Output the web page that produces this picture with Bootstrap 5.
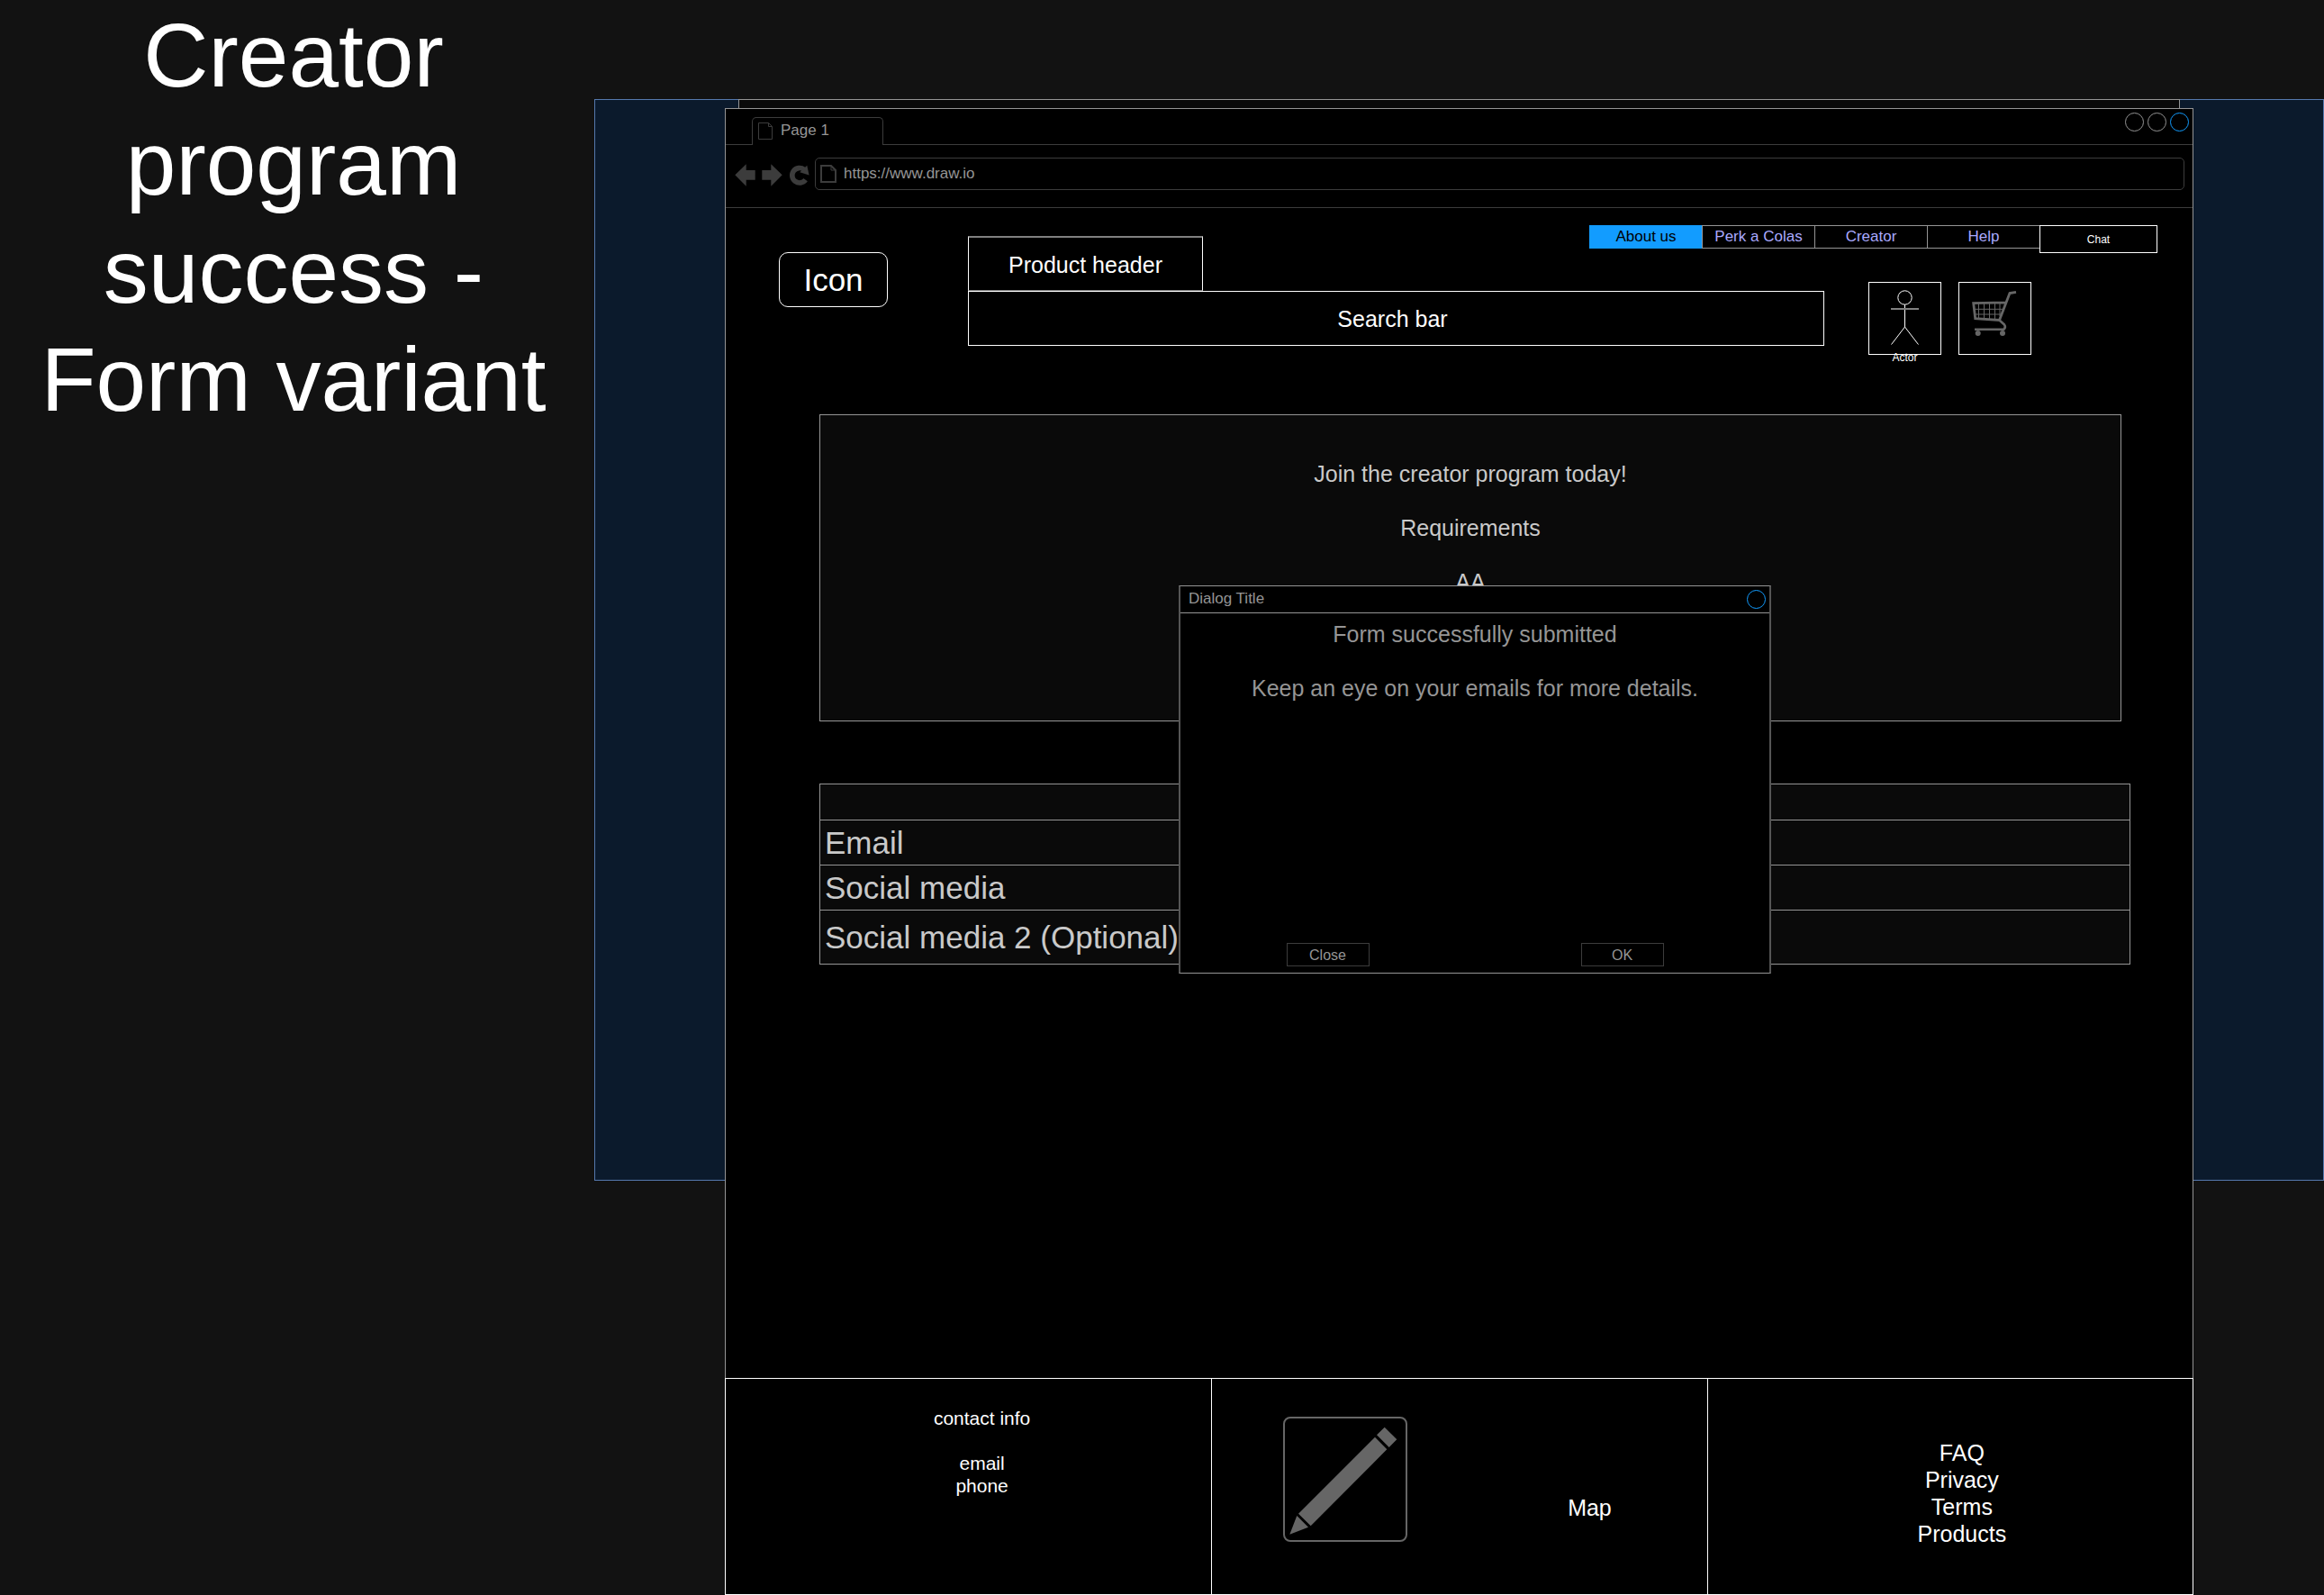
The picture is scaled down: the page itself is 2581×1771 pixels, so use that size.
<!DOCTYPE html>
<html lang="en">
<head>
<meta charset="utf-8">
<meta name="viewport" content="width=device-width, initial-scale=1">
<title>Creator program success - Form variant</title>
<link href="https://cdn.jsdelivr.net/npm/bootstrap@5.3.0/dist/css/bootstrap.min.css" rel="stylesheet">
<style>
  :root { --line: #959595; --dim: #3c3c3c; --panel: #0a0a0a; --blue: #129cff; }
  body { background: #121212; color: #fff; font-family: "Liberation Sans", Arial, sans-serif; font-size: 25px; line-height: 30px; }
  a { color: inherit; text-decoration: none; }
  button, input { font: inherit; color: inherit; background: transparent; }
  input:focus { outline: 1px solid var(--blue); }
  svg { display: block; }

  .side-title { flex: 0 0 660px; font-size: 100px; line-height: 120px; font-weight: 400; padding: 1px 8px 0 0; }

  /* layered boards: backdrop, sheet and browser share one grid cell */
  .stage { padding-top: 110px; grid-template-columns: minmax(0, 1fr); }
  .stage > * { grid-area: 1 / 1; }
  .backdrop { height: 1201px; background: #0b1a2c; border: 1px solid #5578ad; }
  .sheet { height: 1201px; margin: 0 160px; background: var(--panel); border: 1px solid var(--line); }
  .browser { margin: 10px 145px 0; background: #000; border: 1px solid var(--line); border-bottom: 0; }

  .titlebar { border-bottom: 1px solid var(--dim); color: var(--line); font-size: 17px; line-height: 20px; height: 40px; padding: 0 4px 0 29px; }
  .tab-page { width: 146px; height: 31px; margin-bottom: -1px; padding: 0 6px 2px; gap: 8px; border: 1px solid var(--dim); border-bottom: 0; border-radius: 5px 5px 0 0; background: #000; }
  .dot-btn { width: 21px; height: 21px; padding: 0; border: 1px solid var(--line); border-radius: 50%; }
  .dot-btn.close-dot { border-color: var(--blue); }
  .win-dots { gap: 4px; padding-top: 4px; }

  .toolbar { height: 70px; padding: 14px 9px 0 10px; gap: 6px; border-bottom: 1px solid var(--dim); color: var(--line); font-size: 17px; line-height: 20px; }
  .tool-btns { gap: 7px; height: 38px; }
  .tool-btns button { border: 0; padding: 0; }
  .address { height: 36px; border: 1px solid var(--dim); border-radius: 5px; padding: 0 5px; gap: 8px; }
  .address input { border: 0; padding: 0; }

  .site-head { display: grid; grid-template-columns: 210px minmax(0, 1fr) 370px; padding: 19px 39px 0 59px; align-items: start; }
  .site-head > * { grid-row: 1; }
  .logo-box { grid-column: 1; width: 121px; height: 61px; margin-top: 30px; border: 1px solid #fff; border-radius: 10px; font-size: 35px; line-height: 42px; }
  .search-area { grid-column: 2; margin-top: 12px; }
  .product-box { width: 261px; height: 61px; padding-top: 2px; border: 1px solid #fff; border-top: 2px solid #808080; border-bottom-color: #808080; }
  .search-box { height: 61px; border: 1px solid #fff; border-radius: 0; text-align: center; padding: 2px 8px 0 0; }
  .search-box::placeholder { color: #fff; opacity: 1; }
  .top-nav { grid-column: 2 / 4; justify-self: end; font-size: 17px; line-height: 20px; color: #aaf; }
  .top-nav a { width: 125px; height: 26px; border: 1px solid var(--line); border-right: 0; }
  .top-nav a.current { background: var(--blue); border-color: var(--blue); color: #000; }
  .top-nav a.chat-link { width: 131px; height: 31px; border: 1px solid #fff; color: #fff; font-size: 12px; }
  .tiles { grid-column: 3; margin: 63px 0 0 49px; gap: 19px; }
  .tile { width: 81px; height: 81px; border: 1px solid #fff; }
  .tile-label { bottom: -11px; font-size: 12px; line-height: 14px; }

  .content-area { margin: 66px 69px 0 104px; color: #c9c9c9; }
  .hero { height: 341px; margin-right: 10px; padding-top: 50px; background: var(--panel); border: 1px solid var(--line); }
  .hero p, .dialog-text p { margin-bottom: 30px; }
  .entry-form { margin-top: 69px; background: var(--panel); border: 1px solid var(--line); font-size: 35px; line-height: 42px; }
  .form-head { height: 39px; }
  .entry-row { height: 50px; padding-left: 5px; border-top: 1px solid var(--line); }
  .entry-row.tall { height: 60px; }
  .entry-row label { flex: 0 0 50%; }
  .entry-row input { border: 0; min-width: 0; }

  .dialog { top: 190px; width: 658px; height: 431px; background: #000; border: 1px solid var(--line); border-left: 2px solid #555; border-right: 2px solid #555; color: var(--line); }
  .dialog-bar { height: 30px; padding: 0 4px 0 9px; border-bottom: 1px solid var(--line); font-size: 17px; line-height: 20px; }
  .dialog-bar span { padding-bottom: 2px; }
  .dialog-text { padding-top: 8px; }
  .dialog-btns { padding-bottom: 7px; font-size: 16px; line-height: 20px; }
  .dialog-btns button { width: 92px; height: 26px; padding: 2px 0 0; border: 1px solid var(--dim); }

  .site-foot { height: 241px; margin: 0 -1px; border: 1px solid #fff; }
  .foot-cell { width: 33.1%; }
  .foot-cell + .foot-cell { border-left: 1px solid #fff; }
  .contact { padding: 31px 0 0 30px; font-size: 21px; line-height: 25px; }
  .contact p { margin-bottom: 25px; }
  .map-cell { width: 33.8%; padding: 42px 106px 0 78px; }
  .map-cell span { padding-bottom: 81px; }
  .foot-links { padding: 67px 0 0 26px; }
</style>
</head>
<body>
<div class="d-flex min-vh-100">
  <h1 class="side-title text-center mb-0">Creator program success - Form variant</h1>

  <div class="stage d-grid flex-grow-1">
    <div class="backdrop"></div>
    <div class="sheet"></div>

    <div class="browser d-flex flex-column">
      <div class="titlebar d-flex justify-content-between">
        <div class="tab-page d-flex align-items-center align-self-end">
          <svg width="17" height="20" viewBox="0 0 17 20" fill="none" stroke="#3c3c3c"><path d="M.5 1.5h11l4 4v14H.5z M11.5 1.5v4h4"/></svg>
          <span>Page 1</span>
        </div>
        <div class="win-dots d-flex">
          <button class="dot-btn" type="button" aria-label="Minimize"></button>
          <button class="dot-btn" type="button" aria-label="Maximize"></button>
          <button class="dot-btn close-dot" type="button" aria-label="Close window"></button>
        </div>
      </div>

      <div class="toolbar d-flex align-items-start">
        <div class="tool-btns d-flex align-items-center">
          <button type="button" aria-label="Back"><svg width="23" height="26" viewBox="0 0 23 26" fill="#3c3c3c"><path d="M.3 13.3 12.7 1.3V8h10v10.7h-10v7z"/></svg></button>
          <button type="button" aria-label="Forward"><svg width="23" height="26" viewBox="0 0 23 26" fill="#3c3c3c"><path d="M22.7 13.3 10.3 1.3V8h-10v10.7h10v7z"/></svg></button>
          <button type="button" aria-label="Reload"><svg width="23" height="26" viewBox="0 0 23 26" fill="none"><path d="M18.6 18.6A8.2 8.2 0 1 1 17 7.3" stroke="#3c3c3c" stroke-width="5.6"/><path d="M20.3 2.8 22.6 13.6 12.2 10.2z" fill="#3c3c3c"/></svg></button>
        </div>
        <div class="address d-flex align-items-center flex-grow-1">
          <svg width="18" height="22" viewBox="0 0 18 22" fill="none" stroke="#3c3c3c" stroke-width="2"><path d="M1 2h11l5 5v13H1z"/><path d="M12 2v5h5" stroke-width="1"/></svg>
          <input class="flex-grow-1" type="text" value="https://www.draw.io" aria-label="Address">
        </div>
      </div>

      <header class="site-head">
        <a href="#" class="logo-box d-flex align-items-center justify-content-center">Icon</a>
        <div class="search-area">
          <a href="#" class="product-box d-flex align-items-center justify-content-center">Product header</a>
          <input class="search-box d-block w-100" type="text" placeholder="Search bar" aria-label="Search bar">
        </div>
        <nav class="top-nav d-flex align-items-start">
          <a href="#" class="current d-flex align-items-center justify-content-center">About us</a>
          <a href="#" class="d-flex align-items-center justify-content-center">Perk a Colas</a>
          <a href="#" class="d-flex align-items-center justify-content-center">Creator</a>
          <a href="#" class="d-flex align-items-center justify-content-center">Help</a>
          <a href="#" class="chat-link d-flex align-items-center justify-content-center">Chat</a>
        </nav>
        <div class="tiles d-flex">
          <a href="#" class="tile position-relative">
            <svg width="79" height="79" viewBox="1 1 79 79" fill="none" stroke="#fff"><circle cx="40.5" cy="17.5" r="7.7"/><path d="M40.5 25.2V50L25.5 69.5M40.5 50l15 19.5"/><path d="M25 30h31" stroke="#808080" stroke-width="2"/></svg>
            <span class="tile-label position-absolute start-50 translate-middle-x">Actor</span>
          </a>
          <a href="#" class="tile" aria-label="Cart">
            <svg width="79" height="79" viewBox="1 1 79 79" fill="none" stroke="#666">
              <path d="M64 11.3 57 12.5 45.5 42.5 18.7 40.6 16.7 23.6 52.5 22.8" stroke-width="2.8"/>
              <path d="M45.5 42.5 51 47.5Q53 50 50.5 52.7H18" stroke-width="2.6"/>
              <path d="M22.5 24v17M28.5 24v17M34.5 24v18M40.5 24v18M46 24v14M18 30.3h31M18 36h29"/>
              <circle cx="21.7" cy="57" r="3" fill="#666" stroke="none"/><circle cx="49" cy="57" r="3" fill="#666" stroke="none"/>
            </svg>
          </a>
        </div>
      </header>

      <main class="content-area position-relative flex-grow-1">
        <section class="hero text-center">
          <p>Join the creator program today!</p>
          <p>Requirements</p>
          <p>AA</p>
        </section>

        <form class="entry-form">
          <div class="form-head"></div>
          <div class="entry-row d-flex align-items-center">
            <label for="email">Email</label><input class="flex-grow-1" id="email" type="email">
          </div>
          <div class="entry-row d-flex align-items-center">
            <label for="social">Social media</label><input class="flex-grow-1" id="social" type="text">
          </div>
          <div class="entry-row tall d-flex align-items-center">
            <label for="social2">Social media 2 (Optional)</label><input class="flex-grow-1" id="social2" type="text">
          </div>
        </form>

        <div class="dialog position-absolute start-50 translate-middle-x d-flex flex-column" role="dialog" aria-labelledby="dialog-title">
          <div class="dialog-bar d-flex align-items-center justify-content-between">
            <span id="dialog-title">Dialog Title</span>
            <button class="dot-btn close-dot" type="button" aria-label="Close dialog"></button>
          </div>
          <div class="dialog-text text-center flex-grow-1">
            <p>Form successfully submitted</p>
            <p>Keep an eye on your emails for more details.</p>
          </div>
          <div class="dialog-btns d-flex">
            <div class="w-50 d-flex justify-content-center"><button type="button">Close</button></div>
            <div class="w-50 d-flex justify-content-center"><button type="button">OK</button></div>
          </div>
        </div>
      </main>

      <footer class="site-foot d-flex">
        <div class="foot-cell contact text-center">
          <p>contact info</p>
          <div>email</div>
          <div>phone</div>
        </div>
        <div class="foot-cell map-cell d-flex justify-content-between">
          <svg width="140" height="140" viewBox="0 0 140 140" fill="#666"><rect x="2" y="1" width="136" height="137" rx="7" fill="none" stroke="#666" stroke-width="2"/><path d="M113.7 11.7 127.3 25.3 118.7 34 105 20.3zM103 22.7 116.3 36.3 31.7 121.3 18 107.7zM16.3 110 29 122.7 8.3 130.7z"/></svg>
          <span class="align-self-end">Map</span>
        </div>
        <nav class="foot-cell foot-links d-flex flex-column align-items-center">
          <a href="#">FAQ</a>
          <a href="#">Privacy</a>
          <a href="#">Terms</a>
          <a href="#">Products</a>
        </nav>
      </footer>
    </div>
  </div>
</div>
<script src="https://cdn.jsdelivr.net/npm/bootstrap@5.3.0/dist/js/bootstrap.bundle.min.js"></script>
</body>
</html>
